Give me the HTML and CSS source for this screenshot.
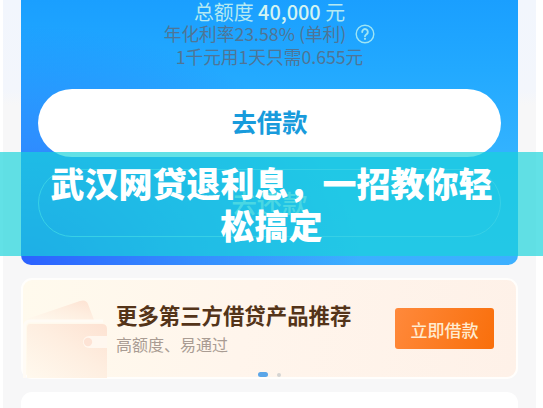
FILE: index.html
```html
<!DOCTYPE html>
<html lang="zh-CN">
<head>
  <meta charset="UTF-8" />
  <title>武汉网贷退利息，一招教你轻松搞定</title>
  <link rel="stylesheet" href="styles.css">
</head>
<body>
  <div class="phone">
    <div class="loan-card">
      <div class="quota">总额度 <b>40,000</b> 元</div>
      <div class="rate">
        <span>年化利率23.58% (单利)</span>
        <svg class="help" viewBox="0 0 20 20" fill="none" stroke="currentColor" stroke-linecap="round">
          <circle cx="10" cy="10" r="8.8" stroke-width="1.4" />
          <path d="M7.2 8a2.8 2.8 0 1 1 4.4 2.2c-1 .7-1.6 1.1-1.6 2.1" stroke-width="1.9" />
          <circle cx="10" cy="14.8" r=".5" stroke-width="1.2" />
        </svg>
      </div>
      <div class="cost">1千元用1天只需0.655元</div>
      <div class="btn borrow">去借款</div>
      <div class="btn repay">去还款</div>
    </div>

    <div class="promo">
      <svg class="wallet" viewBox="0 0 85 98">
        <defs>
          <linearGradient id="wallet" x1="0" y1="1" x2="1" y2="0">
            <stop offset="0" stop-color="#fff9ee" />
            <stop offset=".55" stop-color="#feeee0" />
            <stop offset="1" stop-color="#fde2d2" />
          </linearGradient>
        </defs>
        <path d="M4 39L57 21q6-2 8 3l6 16H4z" fill="url(#wallet)" />
        <path d="M1.5 98V47q0-6 6-6H80" fill="none" stroke="#fffbf5" stroke-width="3" />
        <path d="M7 44h72q5 0 5 5v49H4V48q0-4 3-4z" fill="url(#wallet)" />
        <path d="M84 56H66a6 6 0 0 0 0 12h18z" fill="#fff7ef" />
        <circle cx="65" cy="62" r="4.2" fill="#fde3d5" />
      </svg>
      <div class="promo-text">
        <div class="promo-title">更多第三方借贷产品推荐</div>
        <div class="promo-sub">高额度、易通过</div>
      </div>
      <div class="promo-btn">立即借款</div>
      <div class="dots"><i class="dot active"></i><i class="dot"></i></div>
    </div>

    <div class="next-card"></div>
  </div>

  <div class="banner">武汉网贷退利息，一招教你轻<br>松搞定</div>
</body>
</html>
```

FILE: styles.css
```css
* { box-sizing: border-box; }
body { margin: 0; height: 408px; overflow: hidden; position: relative; background: #fff; font-family: "Noto Sans CJK SC", sans-serif; white-space: nowrap; }

.phone { width: 533px; height: 408px; margin-left: 3px; padding: 0 18px; overflow: hidden; background: linear-gradient(#f2f6fd 0, #f3f6fc 90px, #f7f7f8 105px, #f7f7f8 100%); }

.loan-card { height: 265px; display: flex; flex-direction: column; align-items: center; border-radius: 0 0 10px 10px; background: radial-gradient(ellipse 340px 240px at 0 100%, rgba(42,88,255,.9) 0, rgba(42,98,255,.45) 50%, rgba(42,110,255,0) 100%), linear-gradient(#1a9fff 0, #22a9ff 70px, #32b2ff 150px, #3db0ff 265px); }
.quota { height: 22px; line-height: 24px; font-size: 19.9px; color: #b5e9f2; }
.quota b { font-weight: 500; color: #d3f4f2; }
.rate { height: 23px; display: flex; align-items: center; gap: 9px; font-size: 17.7px; line-height: 23px; color: #4f7596; }
.help { width: 20px; height: 20px; color: #9fe5f4; }
.cost { height: 22px; line-height: 22px; font-size: 17.7px; color: #4f7596; }
.btn { width: 463px; height: 68px; border-radius: 34px; text-align: center; font-size: 25.3px; line-height: 64px; font-weight: 500; }
.borrow { margin-top: 22px; background: #fff; color: #189bdc; font-weight: 700; }
.repay { margin-top: 12px; border: 1.5px solid #79cbff; color: #b4e0f5; }

.promo { position: relative; height: 101px; margin-top: 13px; display: flex; align-items: center; padding-right: 22px; border: 2px solid #fffefc; border-radius: 11px; background: linear-gradient(100deg, #fffaed 0, #fff5ec 45%, #fef1e8 100%); }
.wallet { width: 85px; height: 98px; }
.promo-text { flex: 1; padding-left: 8px; }
.promo-title { height: 30px; line-height: 29px; font-size: 21.4px; font-weight: 700; color: #543419; }
.promo-sub { height: 28px; line-height: 28px; font-size: 16px; color: #a99c93; }
.promo-btn { width: 99px; height: 41px; border-radius: 3px; background: linear-gradient(110deg, #ff893b, #f96f0b); color: #ffebcf; font-size: 17px; font-weight: 500; line-height: 43px; text-align: center; }
.dots { position: absolute; left: 235px; bottom: 0; display: flex; align-items: center; gap: 9px; }
.dot { width: 4px; height: 4px; border-radius: 2px; background: #d5d4d2; }
.dot.active { width: 10px; height: 5px; border-radius: 3px; background: #5ba6e8; }

.next-card { height: 40px; margin-top: 13px; border-radius: 11px; background: #fff; }

.banner { position: absolute; left: 0; right: 0; top: 152px; height: 104px; padding-top: 10px; background: rgba(24,211,218,.68); color: #fff; font-size: 34px; font-weight: 900; line-height: 42px; text-align: center; }
```
